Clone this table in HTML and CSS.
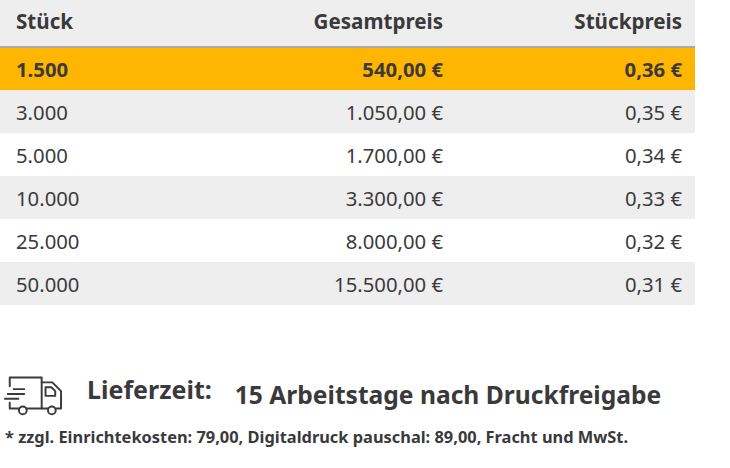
FILE: index.html
```html
<!DOCTYPE html>
<html lang="de">
<head>
<meta charset="utf-8">
<title>Staffelpreise</title>
<link rel="stylesheet" href="styles.css">
</head>
<body>
<div class="page">
  <table class="prices">
    <colgroup>
      <col class="c-qty">
      <col class="c-total">
      <col class="c-unit">
    </colgroup>
    <thead>
      <tr>
        <th class="qty">Stück</th>
        <th class="num">Gesamtpreis</th>
        <th class="num last">Stückpreis</th>
      </tr>
    </thead>
    <tbody>
      <tr class="active">
        <td class="qty">1.500</td>
        <td class="num">540,00 €</td>
        <td class="num last">0,36 €</td>
      </tr>
      <tr class="alt">
        <td class="qty">3.000</td>
        <td class="num">1.050,00 €</td>
        <td class="num last">0,35 €</td>
      </tr>
      <tr>
        <td class="qty">5.000</td>
        <td class="num">1.700,00 €</td>
        <td class="num last">0,34 €</td>
      </tr>
      <tr class="alt">
        <td class="qty">10.000</td>
        <td class="num">3.300,00 €</td>
        <td class="num last">0,33 €</td>
      </tr>
      <tr>
        <td class="qty">25.000</td>
        <td class="num">8.000,00 €</td>
        <td class="num last">0,32 €</td>
      </tr>
      <tr class="alt">
        <td class="qty">50.000</td>
        <td class="num">15.500,00 €</td>
        <td class="num last">0,31 €</td>
      </tr>
    </tbody>
  </table>

  <div class="delivery">
    <svg class="truck" width="60" height="46" viewBox="0 0 62 46" fill="none" stroke="#3a3a3a" stroke-width="2" stroke-linecap="round" stroke-linejoin="round">
      <path d="M8 16 V7 H41 V39"/>
      <path d="M12 19 H23 M6 24 H23 M3 29 H17"/>
      <path d="M8 33 V39 H17.5"/>
      <circle cx="21.5" cy="41" r="4"/>
      <path d="M25.5 39 H47.5"/>
      <circle cx="51.5" cy="41" r="4"/>
      <path d="M41 12 H52 L61 21 V39 H55.5"/>
      <path d="M45 17 H51 L55 21 V26 H45 Z"/>
    </svg>
    <span class="label">Lieferzeit:</span>
    <span class="value">15 Arbeitstage nach Druckfreigabe</span>
  </div>
  <p class="note">* zzgl. Einrichtekosten: 79,00, Digitaldruck pauschal: 89,00, Fracht und MwSt.</p>
</div>
</body>
</html>
```

FILE: styles.css
```css
html, body {
  margin: 0;
  padding: 0;
  background: #ffffff;
}

.page {
  font-family: "Noto Sans", "Open Sans", sans-serif;
  color: #3a3a3c;
  width: 730px;
}

.prices {
  width: 695px;
  border-collapse: collapse;
  table-layout: fixed;
  font-size: 20.3px;
}

.c-qty { width: 250px; }
.c-total { width: 205px; }
.c-unit { width: 240px; }

.prices th,
.prices td {
  padding: 0;
  white-space: nowrap;
}

.prices thead tr {
  background: #eeeeee;
  height: 47px;
  border-bottom: 2px solid #a9a9a9;
}

.prices th {
  font-weight: 700;
  font-size: 20.6px;
  vertical-align: middle;
  padding-bottom: 4px;
}

.prices tbody tr {
  height: 43px;
  background: #ffffff;
}

.prices tbody tr.alt {
  background: #eeeeee;
}

.prices tbody tr.active {
  background: #ffb600;
  font-weight: 700;
}

.qty {
  text-align: left;
  padding-left: 16px !important;
}

.num {
  text-align: right;
  padding-right: 12px !important;
}

.num.last {
  padding-right: 13px !important;
}

.delivery {
  display: flex;
  align-items: center;
  margin-top: 64px;
  padding-left: 2px;
  height: 48px;
}

.truck {
  display: block;
  flex: none;
}

.label {
  font-weight: 700;
  font-size: 25px;
  margin-left: 25px;
  margin-top: -8px;
}

.value {
  font-weight: 700;
  font-size: 24.6px;
  margin-left: 23px;
  margin-top: 3px;
}

.note {
  margin: 8px 0 0 5px;
  font-weight: 700;
  font-size: 16.4px;
}
```
